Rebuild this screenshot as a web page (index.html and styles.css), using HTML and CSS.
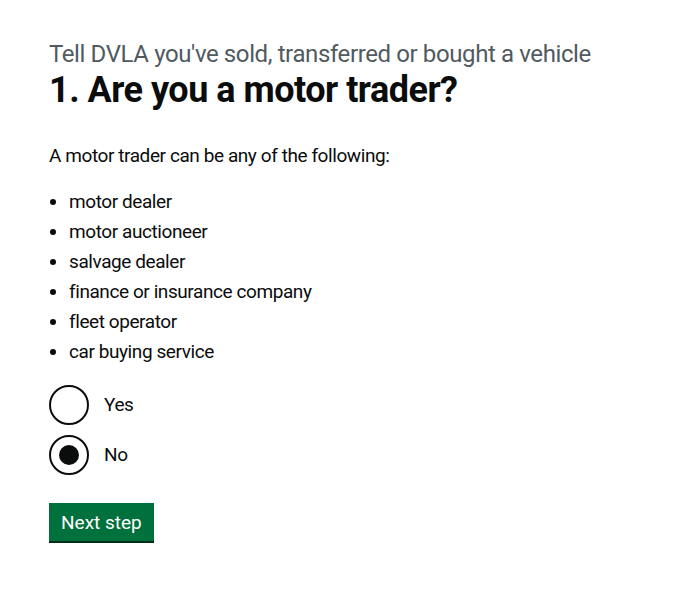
FILE: index.html
```html
<!DOCTYPE html>
<html lang="en">
<head>
  <meta charset="UTF-8" />
  <meta name="viewport" content="width=device-width, initial-scale=1.0" />
  <title>Are you a motor trader? - Tell DVLA you've sold, transferred or bought a vehicle</title>
  <link rel="stylesheet" href="styles.css">
</head>
<body>
  <main class="main">
    <form class="question">
      <span class="caption">Tell DVLA you've sold, transferred or bought a vehicle</span>
      <h1 class="heading">1. Are you a motor trader?</h1>

      <p class="body">A motor trader can be any of the following:</p>
      <ul class="list">
        <li>motor dealer</li>
        <li>motor auctioneer</li>
        <li>salvage dealer</li>
        <li>finance or insurance company</li>
        <li>fleet operator</li>
        <li>car buying service</li>
      </ul>

      <div class="radios">
        <div class="radio">
          <input class="radio-input" type="radio" id="trader-yes" name="trader" value="yes" />
          <label class="radio-label" for="trader-yes">Yes</label>
        </div>
        <div class="radio">
          <input class="radio-input" type="radio" id="trader-no" name="trader" value="no" checked />
          <label class="radio-label" for="trader-no">No</label>
        </div>
      </div>

      <button type="submit" class="button">Next step</button>
    </form>
  </main>
</body>
</html>
```
FILE: styles.css
```css
body {
  font-family: Roboto, "Liberation Sans", sans-serif;
  margin: 0;
  color: #0b0c0c;
  background: #fff;
}
.main {
  padding: 39px 49px 40px;
}
.caption {
  display: block;
  font-size: 24px;
  line-height: 30px;
  letter-spacing: -0.39px;
  color: #505a5f;
  margin-bottom: 1px;
}
.heading {
  font-size: 36px;
  line-height: 40px;
  font-weight: 700;
  letter-spacing: -0.5px;
  margin: 0 0 33px;
}
.body, .list, .radio-label {
  font-size: 19px;
  line-height: 25px;
  letter-spacing: -0.42px;
}
.body {
  margin: 0 0 21px;
}
.list {
  margin: 0 0 21px;
  padding-left: 20px;
}
.list li {
  margin-bottom: 5px;
}
.radios {
  margin-bottom: 28px;
}
.radio {
  position: relative;
  min-height: 40px;
  padding-left: 40px;
  margin-bottom: 10px;
}
.radio-input {
  position: absolute;
  top: 0;
  left: 0;
  width: 40px;
  height: 40px;
  margin: 0;
  opacity: 0;
}
.radio-label {
  display: inline-block;
  padding: 7px 15px 6px;
}
.radio-label::before {
  content: "";
  position: absolute;
  top: 0;
  left: 0;
  width: 40px;
  height: 40px;
  box-sizing: border-box;
  border: 2px solid #0b0c0c;
  border-radius: 50%;
  background: #fff;
}
.radio-label::after {
  content: "";
  position: absolute;
  top: 10px;
  left: 10px;
  width: 20px;
  height: 20px;
  border-radius: 50%;
  background: #0b0c0c;
  opacity: 0;
}
.radio-input:checked + .radio-label::after {
  opacity: 1;
}
.button {
  font-family: inherit;
  font-size: 19px;
  line-height: 1;
  padding: 8px 10px 7px;
  border: 2px solid transparent;
  border-radius: 0;
  background: #00703c;
  color: #fff;
  box-shadow: 0 2px 0 #002d18;
  cursor: pointer;
}
```
